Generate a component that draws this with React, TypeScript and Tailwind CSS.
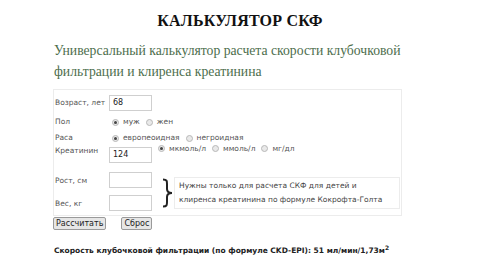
import React from "react";

const Radio = ({ checked }: { checked?: boolean }) => (
  <span className="inline-flex items-center justify-center w-[7px] h-[7px] rounded-full border border-[#b8b8b8] bg-[#e9e9e9] shrink-0">
    {checked && <span className="w-[3px] h-[3px] rounded-full bg-[#444]" />}
  </span>
);

const Opt = ({ checked, label }: { checked?: boolean; label: string }) => (
  <span className="inline-flex items-center gap-[4px] mr-[6px]">
    <Radio checked={checked} />
    <span>{label}</span>
  </span>
);

const Input = ({ value }: { value?: string }) => (
  <div className="w-[43px] h-[16px] border border-[#cfcfcf] bg-white flex items-center pl-[3px] text-[8px] text-[#222]">
    {value}
  </div>
);

export default function App() {
  return (
    <div className="w-[480px] h-[270px] bg-white overflow-hidden" style={{ fontFamily: '"DejaVu Sans", Verdana, sans-serif' }}>
      <div
        className="text-center font-bold text-[16px] leading-[20px] pt-[11px] text-[#111] tracking-[0.2px]"
        style={{ fontFamily: '"Liberation Serif", "Times New Roman", serif' }}
      >
        КАЛЬКУЛЯТОР СКФ
      </div>
      <div
        className="ml-[54px] mt-[9px] text-[13.7px] leading-[21px] text-[#4d6e4d] whitespace-nowrap"
        style={{ fontFamily: '"Liberation Serif", "Times New Roman", serif' }}
      >
        Универсальный калькулятор расчета скорости клубочковой
        <br />
        фильтрации и клиренса креатинина
      </div>
      <div className="ml-[53px] mt-[7px] w-[349px] h-[127px] border border-[#ececec] text-[7.5px] text-[#555] flex flex-col">
        <div className="flex items-center mt-[5px] h-[16px]">
          <div className="w-[55px] pl-[1px]">Возраст, лет</div>
          <Input value="68" />
        </div>
        <div className="flex items-center h-[16px] mt-[3px]">
          <div className="w-[58px] pl-[1px]">Пол</div>
          <Opt checked label="муж" />
          <Opt label="жен" />
        </div>
        <div className="flex items-center h-[16px]">
          <div className="w-[58px] pl-[1px]">Раса</div>
          <Opt checked label="европеоидная" />
          <Opt label="негроидная" />
        </div>
        <div className="flex items-start h-[17px] mt-[1px]">
          <div className="w-[55px] pl-[1px] mt-[-2px]">Креатинин</div>
          <div>
            <Input value="124" />
          </div>
          <div className="flex items-center ml-[6px] -mt-[4px]">
            <Opt checked label="мкмоль/л" />
            <Opt label="ммоль/л" />
            <Opt label="мг/дл" />
          </div>
        </div>
        <div className="flex mt-[8px]">
          <div className="flex flex-col">
            <div className="flex items-center h-[16px]">
              <div className="w-[55px] pl-[1px] mt-[2px]">Рост, см</div>
              <Input />
            </div>
            <div className="flex items-center h-[16px] mt-[7px]">
              <div className="w-[55px] pl-[1px] mt-[2px]">Вес, кг</div>
              <Input />
            </div>
          </div>
          <div className="flex items-center ml-[9px] mt-[3px]">
            <svg width="13" height="30" viewBox="0 0 13 30" className="shrink-0">
              <path
                d="M2 1.5 C6 1.5 6 3 6 6 L6 11 C6 13.5 7.5 15 11 15 C7.5 15 6 16.5 6 19 L6 24 C6 27 6 28.5 2 28.5"
                fill="none"
                stroke="#222"
                strokeWidth="2"
              />
            </svg>
            <div className="w-[226px] h-[32px] border border-[#ececec] pl-[4px] flex flex-col justify-center leading-[14px] text-[#444]">
              <div>Нужны только для расчета СКФ для детей и</div>
              <div>клиренса креатинина по формуле Кокрофта-Голта</div>
            </div>
          </div>
        </div>
      </div>
      <div className="ml-[53px] mt-[1px] flex gap-[15px] text-[8px] text-[#222]">
        <div className="h-[13px] px-[2px] border border-[#9a9a9a] rounded-[2px] bg-[#e6e6e6] flex items-center">Рассчитать</div>
        <div className="h-[13px] px-[2px] border border-[#9a9a9a] rounded-[2px] bg-[#e6e6e6] flex items-center">Сброс</div>
      </div>
      <div className="ml-[54px] mt-[15px] text-[7.5px] font-bold text-[#222]">
        Скорость клубочковой фильтрации (по формуле CKD-EPI): 51 мл/мин/1,73м<sup className="text-[6px] -top-[3px]">2</sup>
      </div>
    </div>
  );
}
